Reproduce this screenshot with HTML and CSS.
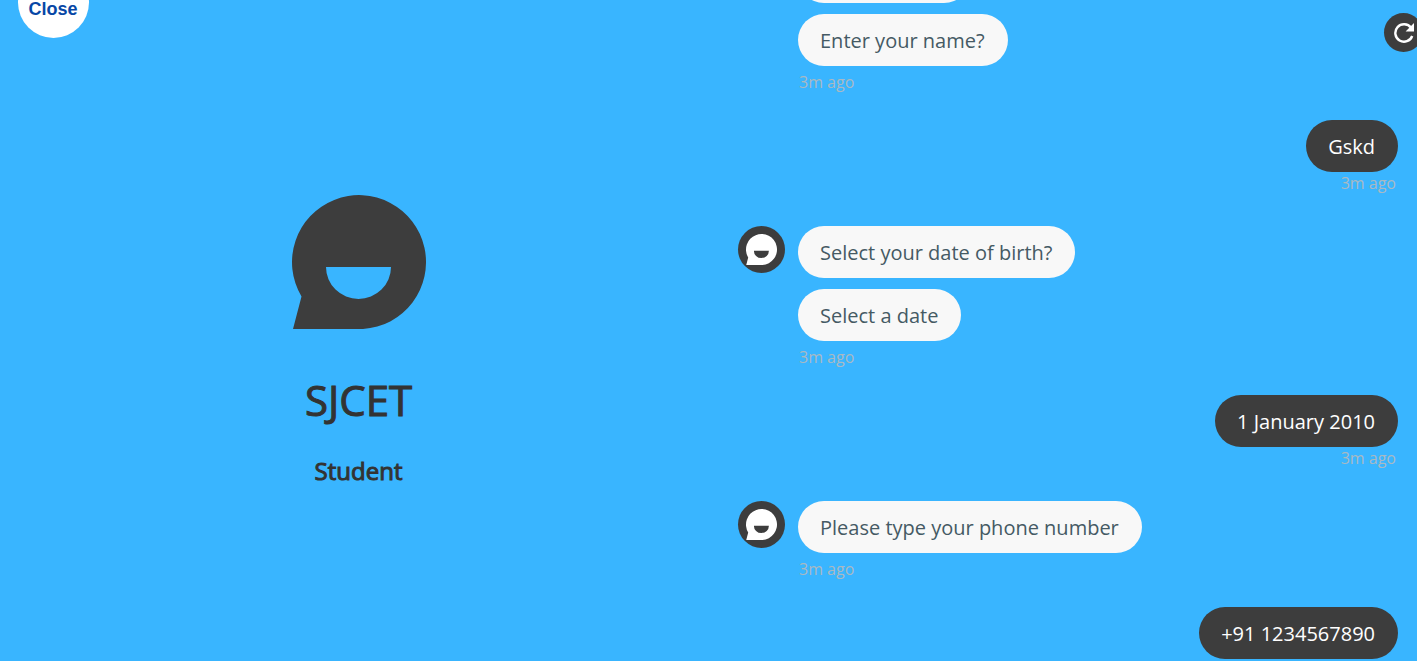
FILE: index.html
```html
<!DOCTYPE html>
<html lang="en">
<head>
<meta charset="utf-8">
<title>SJCET Student</title>
<link rel="stylesheet" href="styles.css">
</head>
<body>
<svg class="symbols" aria-hidden="true">
  <symbol id="bot" viewBox="0 0 134 134">
    <path fill-rule="evenodd" d="M9.5 101.500A67 67 0 1 1 71 134L1 134ZM34 72A32.500 32 0 0 0 99 72Z"/>
  </symbol>
</svg>
<div class="app">
  <button class="close" type="button">Close</button>
  <button class="refresh" type="button" aria-label="Restart">
    <svg class="refresh-icon" viewBox="0 0 20 20" aria-hidden="true">
      <path class="arc" d="M17 4.800A8.700 8.700 0 1 0 18.200 13"/>
      <path class="head" d="M20 0V8.400H11.600Z"/>
    </svg>
  </button>
  <aside class="profile">
    <svg class="logo" aria-hidden="true"><use href="#bot"/></svg>
    <h1 class="name">SJCET</h1>
    <h2 class="role">Student</h2>
  </aside>
  <main class="chat">
    <section class="group bot">
      <div class="bubbles">
        <p class="bubble clipped"></p>
        <p class="bubble">Enter your name?</p>
        <time class="time">3m ago</time>
      </div>
    </section>
    <section class="group user">
      <p class="bubble">Gskd</p>
      <time class="time">3m ago</time>
    </section>
    <section class="group bot">
      <span class="avatar"><svg class="avatar-icon" aria-hidden="true"><use href="#bot"/></svg></span>
      <div class="bubbles">
        <p class="bubble">Select your date of birth?</p>
        <p class="bubble">Select a date</p>
        <time class="time">3m ago</time>
      </div>
    </section>
    <section class="group user">
      <p class="bubble">1 January 2010</p>
      <time class="time">3m ago</time>
    </section>
    <section class="group bot">
      <span class="avatar"><svg class="avatar-icon" aria-hidden="true"><use href="#bot"/></svg></span>
      <div class="bubbles">
        <p class="bubble">Please type your phone number</p>
        <time class="time">3m ago</time>
      </div>
    </section>
    <section class="group user">
      <p class="bubble">+91 1234567890</p>
    </section>
  </main>
</div>
</body>
</html>
```
FILE: styles.css
```css
* { box-sizing: border-box; }
body {
  margin: 0;
  border-right: 1px solid #fff;
  font-family: "Open Sans", sans-serif;
}
.symbols { position: absolute; width: 0; height: 0; }
.app {
  position: relative;
  display: grid;
  grid-template-columns: 717fr 700fr;
  height: 100vh;
  overflow: hidden;
  background: #39b5ff;
}
.close {
  position: absolute;
  top: -33px;
  left: 18px;
  width: 71px;
  height: 71px;
  padding: 14px 1px 0 0;
  border: 0;
  border-radius: 50%;
  background: #fff;
  color: #0747a6;
  font: bold 18px "Liberation Sans", sans-serif;
}
.refresh {
  position: absolute;
  top: 13px;
  right: -6px;
  display: grid;
  place-items: center;
  width: 39px;
  height: 39px;
  padding: 0;
  border: 0;
  border-radius: 50%;
  background: #3d3d3d;
}
.refresh-icon { width: 20px; height: 20px; }
.arc { fill: none; stroke: #fff; stroke-width: 2.400; }
.head { fill: #fff; }
.profile {
  display: flex;
  flex-direction: column;
  align-items: center;
  justify-content: center;
  padding-top: 22px;
  color: #333;
}
.logo { width: 134px; height: 134px; fill: #3d3d3d; }
.name,
.role {
  font-weight: 400;
  -webkit-text-stroke: 1px currentColor;
}
.name {
  margin: 41px 0 0;
  font-size: 42px;
  line-height: 60px;
}
.role {
  margin: 23px 0 0;
  font-size: 24px;
  line-height: 36px;
}
.chat {
  display: flex;
  flex-direction: column;
  justify-content: flex-end;
  min-height: 0;
  padding: 0 19px 2px 21px;
}
.group { display: flex; flex-shrink: 0; }
.bubbles {
  display: flex;
  flex-direction: column;
  align-items: flex-start;
}
.bot .bubbles { margin-left: 60px; }
.bot .avatar + .bubbles { margin-left: 13px; }
.user { flex-direction: column; align-items: flex-end; }
.bubble {
  margin: 0;
  padding: 13px 23px 11px 22px;
  border-radius: 26px;
  font-size: 20px;
  line-height: 28px;
}
.bubble + .bubble { margin-top: 11px; }
.bot .bubble { background: #f8f8f8; color: #455a64; }
.user .bubble { background: #3d3d3d; color: #fff; }
.bot .clipped { width: 172px; height: 52px; }
.time {
  height: 54px;
  padding: 0 2px;
  color: #a9b9c3;
  font-size: 16px;
  line-height: 22px;
}
.bot .time { padding: 5px 1px 0; }
.avatar {
  display: grid;
  place-items: center;
  width: 47px;
  height: 47px;
  border-radius: 50%;
  background: #3d3d3d;
}
.avatar-icon { width: 31px; height: 31px; fill: #fff; }
```
